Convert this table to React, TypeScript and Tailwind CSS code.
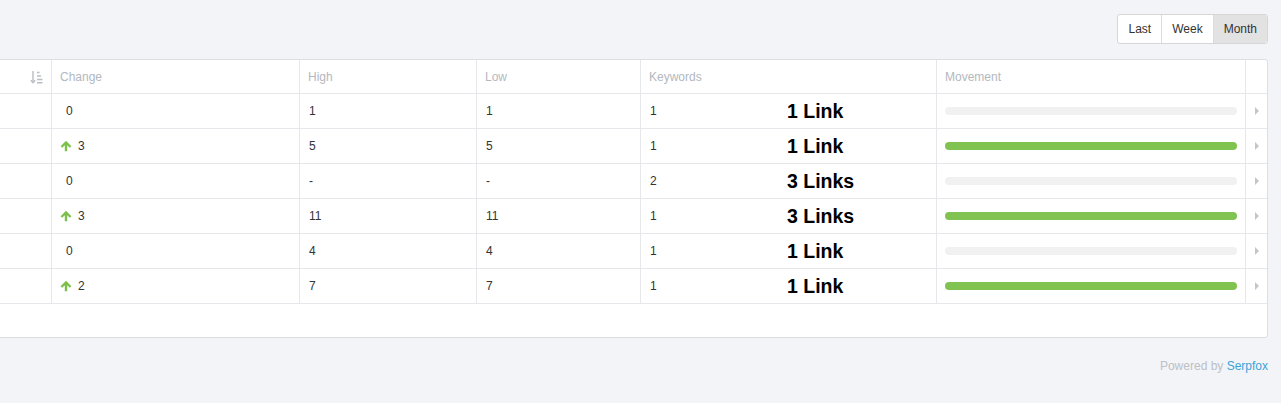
type Row = {
  change: number;
  up: boolean;
  high: string;
  low: string;
  keywords: string;
  links: string;
};

const rows: Row[] = [
  { change: 0, up: false, high: "1", low: "1", keywords: "1", links: "1 Link" },
  { change: 3, up: true, high: "5", low: "5", keywords: "1", links: "1 Link" },
  { change: 0, up: false, high: "-", low: "-", keywords: "2", links: "3 Links" },
  { change: 3, up: true, high: "11", low: "11", keywords: "1", links: "3 Links" },
  { change: 0, up: false, high: "4", low: "4", keywords: "1", links: "1 Link" },
  { change: 2, up: true, high: "7", low: "7", keywords: "1", links: "1 Link" },
];

const cols = "grid grid-cols-[72px_248px_177px_164px_296px_309px_1fr]";

const UpArrow = () => (
  <svg width="12" height="12" viewBox="0 0 12 12" className="shrink-0">
    <path
      d="M6 0.8 L11.4 6.2 L9.8 7.8 L7.2 5.2 L7.2 11.2 L4.8 11.2 L4.8 5.2 L2.2 7.8 L0.6 6.2 Z"
      fill="#7cc04b"
    />
  </svg>
);

const SortIcon = () => (
  <svg width="13" height="14" viewBox="0 0 13 14" fill="none" stroke="#b9bdc3" strokeWidth="1.4">
    <path d="M3 1 V12.5" />
    <path d="M0.8 10.2 L3 12.6 L5.2 10.2" />
    <path d="M7 2.5 H9.5" />
    <path d="M7 6 H11" />
    <path d="M7 9.5 H12.5" />
    <path d="M7 12.8 H12.5" />
  </svg>
);

export default function App() {
  return (
    <div
      className="min-h-[403px] bg-[#f3f4f8] text-[12px] text-[#333]"
      style={{ fontFamily: '"Liberation Sans", Arial, sans-serif' }}
    >
      {/* Range toggles */}
      <div className="flex justify-end pt-[14px] pr-[13px]">
        <div className="flex h-[30px] rounded-[3px] border border-[#d6d6d6] bg-white text-[12px] text-[#333]">
          <button className="px-[10px] border-r border-[#dcdcdc]">Last</button>
          <button className="px-[10px] border-r border-[#dcdcdc]">Week</button>
          <button className="px-[10px] bg-[#e2e2e2] rounded-r-[3px]">Month</button>
        </div>
      </div>

      {/* Table card */}
      <div className="mt-[15px] ml-[-21px] mr-[13px] h-[279px] rounded-[3px] border border-[#dcdee2] bg-white overflow-hidden">
        <div className={`${cols} h-[34px] border-b border-[#e6e7ea] text-[#b3b8c0]`}>
          <div className="flex items-center justify-end pr-[8px] border-r border-[#e6e7ea]">
            <SortIcon />
          </div>
          <div className="flex items-center pl-[8px] border-r border-[#e6e7ea]">Change</div>
          <div className="flex items-center pl-[8px] border-r border-[#e6e7ea]">High</div>
          <div className="flex items-center pl-[8px] border-r border-[#e6e7ea]">Low</div>
          <div className="flex items-center pl-[8px] border-r border-[#e6e7ea]">Keywords</div>
          <div className="flex items-center pl-[8px] border-r border-[#e6e7ea]">Movement</div>
          <div />
        </div>

        {rows.map((r, i) => (
          <div key={i} className={`${cols} h-[35px] border-b border-[#e6e7ea]`}>
            <div className="border-r border-[#e6e7ea]" />
            <div className="flex items-center pl-[8px] border-r border-[#e6e7ea]">
              {r.up ? (
                <span className="flex items-center gap-[6px]">
                  <UpArrow />
                  {r.change}
                </span>
              ) : (
                <span className="pl-[6px]">{r.change}</span>
              )}
            </div>
            <div className="flex items-center pl-[9px] border-r border-[#e6e7ea]">{r.high}</div>
            <div className="flex items-center pl-[9px] border-r border-[#e6e7ea]">{r.low}</div>
            <div className="flex items-center pl-[9px] border-r border-[#e6e7ea]">
              <span className="w-[137px]">{r.keywords}</span>
              <span className="mt-[1px] text-[19.5px] font-bold text-black">{r.links}</span>
            </div>
            <div className="flex items-center px-[8px] border-r border-[#e6e7ea]">
              <div
                className={`h-[8px] w-full rounded-full ${r.up ? "bg-[#80c350]" : "bg-[#f1f1f1]"}`}
              />
            </div>
            <div className="flex items-center justify-center">
              <span className="h-0 w-0 border-y-[4px] border-l-[4px] border-y-transparent border-l-[#c4c6ca]" />
            </div>
          </div>
        ))}
      </div>

      <div className="flex justify-end pr-[13px] pt-[19px] text-[12px] text-[#bcc0c6]">
        Powered by&nbsp;<span className="text-[#3ea3d6]">Serpfox</span>
      </div>
    </div>
  );
}
